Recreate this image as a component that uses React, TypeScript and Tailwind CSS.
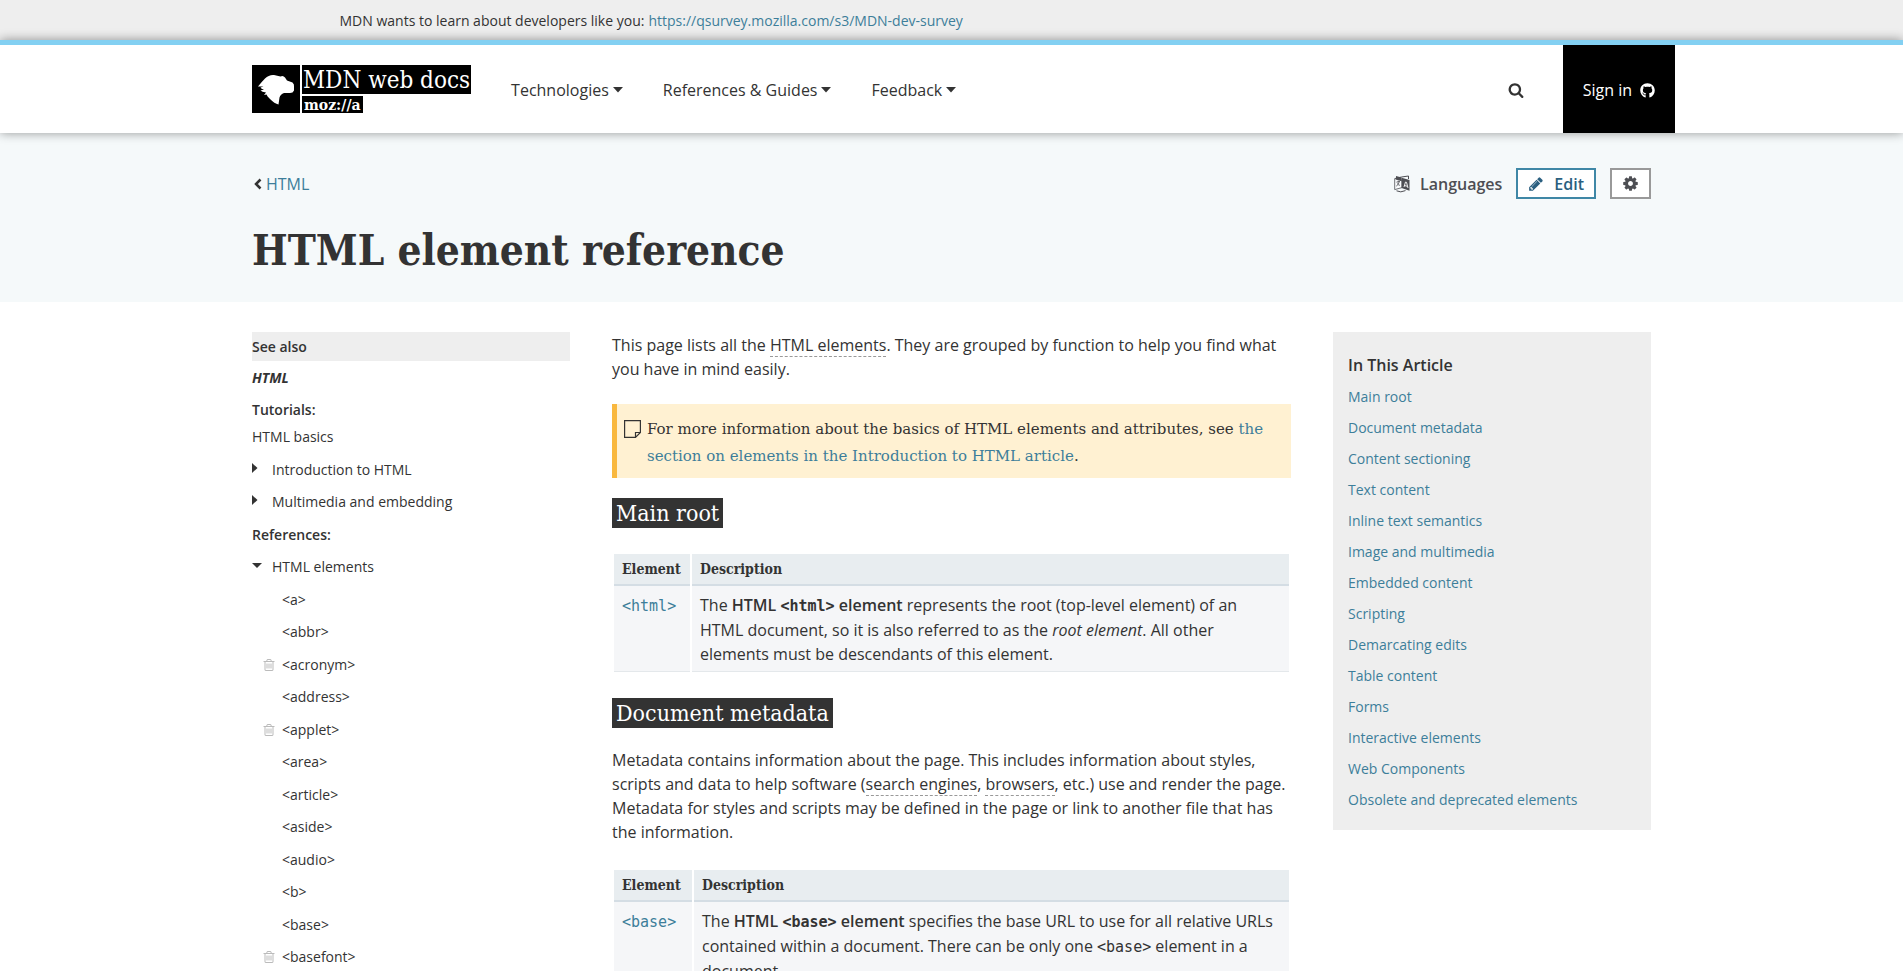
import type { ReactNode } from 'react';
import { FaGithub } from 'react-icons/fa';

const slab = "font-['DejaVu_Serif_Condensed','DejaVu_Serif',serif]";
const slabWide = "font-['DejaVu_Serif',serif]";
const link = 'text-[#3d7e9a] hover:underline';

function Icon({ d, className }: { d: string; className: string }) {
  return (
    <svg viewBox="0 0 1792 1792" className={className} fill="currentColor" aria-hidden="true">
      <path d={d} />
    </svg>
  );
}

const pencil =
  'M491 1536l91-91-235-235-91 91v107h128v128h107zm523-928q0-22-22-22-10 0-17 7l-542 542q-7 7-7 17 0 22 22 22 10 0 17-7l542-542q7-7 7-17zm-54-192l416 416-832 832h-416v-416zm683 96q0 53-37 90l-166 166-416-416 166-165q36-38 90-38 53 0 91 38l235 234q37 39 37 91z';
const cog =
  'M1152 896q0-106-75-181t-181-75-181 75-75 181 75 181 181 75 181-75 75-181zm512-109v222q0 12-8 23t-20 13l-185 28q-19 54-39 91 35 50 107 138 10 12 10 25t-9 23q-27 37-99 108t-94 71q-12 0-26-9l-138-108q-44 23-91 38-16 136-29 186-7 28-36 28h-222q-14 0-24.5-8.5t-11.5-21.5l-28-184q-49-16-90-37l-141 107q-10 9-25 9-14 0-25-11-126-114-165-168-7-10-7-23 0-12 8-23 15-21 51-66.5t54-70.5q-27-50-41-99l-183-27q-13-2-21-12.5t-8-23.5v-222q0-12 8-23t19-13l186-28q14-46 39-92-40-57-107-138-10-12-10-24 0-10 9-23 26-36 98.5-107.5t94.5-71.5q13 0 26 10l138 107q44-23 91-38 16-136 29-186 7-28 36-28h222q14 0 24.5 8.5t11.5 21.5l28 184q49 16 90 37l142-107q9-9 24-9 13 0 25 10 129 119 165 170 7 8 7 22 0 12-8 23-15 21-51 66.5t-54 70.5q26 50 41 98l183 28q13 2 21 12.5t8 23.5z';
const search =
  'M1216 832q0-185-131.5-316.5t-316.5-131.5-316.5 131.5-131.5 316.5 131.5 316.5 316.5 131.5 316.5-131.5 131.5-316.5zm512 832q0 52-38 90t-90 38q-54 0-90-38l-343-342q-179 124-399 124-143 0-273.5-55.5t-225-150-150-225-55.5-273.5 55.5-273.5 150-225 225-150 273.5-55.5 273.5 55.5 225 150 150 225 55.5 273.5q0 220-124 399l343 343q37 37 37 90z';
const trash =
  'M704 736v576q0 14-9 23t-23 9h-64q-14 0-23-9t-9-23v-576q0-14 9-23t23-9h64q14 0 23 9t9 23zm256 0v576q0 14-9 23t-23 9h-64q-14 0-23-9t-9-23v-576q0-14 9-23t23-9h64q14 0 23 9t9 23zm256 0v576q0 14-9 23t-23 9h-64q-14 0-23-9t-9-23v-576q0-14 9-23t23-9h64q14 0 23 9t9 23zm128 724v-948h-896v948q0 22 7 40.5t14.5 27 10.5 8.5h832q3 0 10.5-8.5t14.5-27 7-40.5zm-672-1076h448l-48-117q-7-9-17-11h-317q-10 2-17 11zm928 32v64q0 14-9 23t-23 9h-96v948q0 83-47 143.5t-113 60.5h-832q-66 0-113-58.5t-47-141.5v-952h-96q-14 0-23-9t-9-23v-64q0-14 9-23t23-9h309l70-167q15-37 54-63t79-26h320q40 0 79 26t54 63l70 167h309q14 0 23 9t9 23z';

function LanguageIcon() {
  return (
    <svg viewBox="0 0 16 18" className="h-[18px] w-4" aria-hidden="true">
      <path d="M1 3.5 7.5 2 14.5 1 14.5 4" fill="none" stroke="currentColor" strokeWidth="1" />
      <path d="M.7 3.6V14.6L8 12.6V5.2Z" fill="#fff" fillOpacity=".5" stroke="currentColor" strokeWidth=".8" />
      <path d="M7.6 2.8 15.5 5V15.8L7.6 13Z" fill="currentColor" />
      <path d="M2 1V4.6L7.6 6.3V2.6Z" fill="currentColor" />
      <path d="m10 12 1.5-5 1 .3L14 13M10.4 10.5l3 .8" fill="none" stroke="#fff" strokeWidth=".9" />
      <path d="M2.4 7.2 6 6.4M4.2 5.6v1.6M5.3 6.8Q4.6 9.8 2.2 11.2M3 8.4Q4.2 10 6 10.4" fill="none" stroke="currentColor" strokeWidth=".8" />
      <path d="M2.5 15.8Q6.5 18 11.5 15.6" fill="none" stroke="currentColor" strokeWidth="1" />
    </svg>
  );
}

function Logo() {
  return (
    <a href="#" aria-label="MDN web docs" className="flex gap-0.5 text-white">
      <span className="block size-12 bg-black">
        <svg viewBox="0 0 48 48" className="size-12" fill="#fff" aria-hidden="true">
          <path d="M6 21.5Q10 16.500 13 13.500Q17 9.500 22 10L28.500 11.500Q31 10 33 12.500L35 15.500L40.500 17.500Q42.500 19 42 22V25.500Q41 28 38 28H32Q28.500 29 27.500 32.500L26.500 39.500Q22.500 38.500 18 34Q15 31 14.500 29.500L12 30L14 27.500Q10 27 8.500 25.500L12 24.500Q9 24 8.500 22.500L11.500 21.500Z" />
        </svg>
      </span>
      <span className="flex flex-col items-start gap-0.5">
        <span className={`flex h-[29px] items-center bg-black px-px text-2xl ${slab}`}>MDN web docs</span>
        <span className={`flex h-[17px] items-center bg-black px-0.5 text-sm font-bold ${slabWide}`}>moz://a</span>
      </span>
    </a>
  );
}

function Caret() {
  return (
    <svg viewBox="0 0 10 6" className="h-1.5 w-2.5" fill="currentColor" aria-hidden="true">
      <path d="M0 0H10L5 5.500Z" />
    </svg>
  );
}

function Arrow({ open }: { open?: boolean }) {
  return (
    <svg viewBox="0 0 10 10" className="mb-1 size-2.5" fill="currentColor" aria-hidden="true">
      <path d={open ? 'M0 3H10L5 8Z' : 'M0 0L5.500 5L0 10Z'} />
    </svg>
  );
}

const elements: [string, boolean?][] = [
  ['<a>'],
  ['<abbr>'],
  ['<acronym>', true],
  ['<address>'],
  ['<applet>', true],
  ['<area>'],
  ['<article>'],
  ['<aside>'],
  ['<audio>'],
  ['<b>'],
  ['<base>'],
  ['<basefont>', true],
];

const toc = [
  'Main root',
  'Document metadata',
  'Content sectioning',
  'Text content',
  'Inline text semantics',
  'Image and multimedia',
  'Embedded content',
  'Scripting',
  'Demarcating edits',
  'Table content',
  'Forms',
  'Interactive elements',
  'Web Components',
  'Obsolete and deprecated elements',
];

function Code({ children }: { children: ReactNode }) {
  return <code className="font-['DejaVu_Sans_Mono',monospace] text-[15px]">{children}</code>;
}

function Term({ children }: { children: ReactNode }) {
  return (
    <a href="#" className="border-b border-dashed border-[#999]">
      {children}
    </a>
  );
}

function Heading({ children }: { children: ReactNode }) {
  return (
    <h2 className={`flex h-[30px] w-fit items-center bg-[#333] px-1 text-[23px] text-white ${slab}`}>{children}</h2>
  );
}

function ElementTable({ name, wide, children }: { name: string; wide?: boolean; children: ReactNode }) {
  const th = `h-8 border-b-2 border-[#d4dde4] bg-[#e8edf0] px-2 text-left text-sm leading-5 font-bold ${slab}`;
  const td = 'border-b border-[#e4e8eb] bg-[#f5f6f8] px-2 pt-[7px] pb-[5px] align-top';
  return (
    <table className="w-full border-separate border-spacing-x-0.5 border-spacing-y-0">
      <thead>
        <tr>
          <th className={`${th} ${wide ? 'w-[78px]' : 'w-[76px]'}`}>Element</th>
          <th className={th}>Description</th>
        </tr>
      </thead>
      <tbody>
        <tr>
          <td className={td}>
            <a href="#" className={link}>
              <Code>{name}</Code>
            </a>
          </td>
          <td className={td}>{children}</td>
        </tr>
      </tbody>
    </table>
  );
}

export default function App() {
  return (
    <div className="h-screen overflow-hidden bg-white font-['Open_Sans',sans-serif] text-base leading-6 text-[#333]">
      <div className="h-10 bg-[#eee]">
        <p className="mx-auto flex h-full max-w-[1224px] items-center gap-1 pt-0.5 text-sm">
          MDN wants to learn about developers like you:
          <a href="#" className={link}>
            https://qsurvey.mozilla.com/s3/MDN-dev-survey
          </a>
        </p>
      </div>

      <header className="relative border-t-[5px] border-[#83d0f2] bg-white shadow-[0_0_10px_rgba(0,0,0,0.4)]">
        <div className="mx-auto flex h-[88px] max-w-[1447px] items-center pl-6">
          <Logo />
          <nav className="ml-10 flex gap-10 pt-0.5">
            {['Technologies', 'References & Guides', 'Feedback'].map((label) => (
              <button key={label} type="button" className="flex items-center gap-1">
                {label}
                <Caret />
              </button>
            ))}
          </nav>
          <button type="button" aria-label="Search" className="ml-auto pt-0.5 pr-[39px]">
            <Icon d={search} className="size-4" />
          </button>
          <a href="#" className="flex h-full items-center gap-2 bg-black px-5 pt-0.5 text-white">
            Sign in
            <FaGithub className="size-[15px]" />
          </a>
        </div>
      </header>

      <div className="h-[169px] bg-[#f5f9fa]">
        <div className="mx-auto max-w-[1399px] pt-[35px]">
          <div className="flex h-[31px] items-center">
            <a href="#" className="flex items-center gap-1 text-[#3d7e9a]">
              <svg viewBox="0 0 10 12" className="h-3 w-2.5 text-[#333]" fill="none" stroke="currentColor" strokeWidth="2.5" aria-hidden="true">
                <path d="M8.500 1.500L4 6L8.500 10.500" />
              </svg>
              HTML
            </a>
            <button type="button" className="ml-auto flex items-center gap-2.5 font-semibold text-[#4d4e53]">
              <LanguageIcon />
              Languages
            </button>
            <button type="button" className="ml-3.5 flex h-full items-center gap-2.5 border-2 border-[#3f87a6] bg-white px-2.5 font-semibold text-[#2b5f80]">
              <Icon d={pencil} className="size-4" />
              Edit
            </button>
            <button type="button" aria-label="Settings" className="ml-3.5 flex h-full w-[41px] items-center justify-center border-2 border-[#999] bg-white text-[#4d4e53]">
              <Icon d={cog} className="size-[17px]" />
            </button>
          </div>
          <h1 className={`mt-[22px] text-[42px] leading-[60px] font-bold ${slab}`}>HTML element reference</h1>
        </div>
      </div>

      <div className="mx-auto mt-[30px] grid max-w-[1399px] grid-cols-[318px_1fr_318px] items-start gap-x-[42px]">
        <aside className="text-sm">
          <h3 className="bg-[#eee] py-1 leading-[21px] font-semibold">See also</h3>
          <p className="mt-1.5 leading-[21px] font-bold italic">
            <a href="#">HTML</a>
          </p>
          <p className="mt-[11px] leading-[21px] font-semibold">Tutorials:</p>
          <p className="mt-1.5 mb-[7px] leading-[21px]">
            <a href="#">HTML basics</a>
          </p>
          {['Introduction to HTML', 'Multimedia and embedding'].map((label) => (
            <button key={label} type="button" className="flex h-8 items-center gap-2.5">
              <Arrow />
              {label}
            </button>
          ))}
          <p className="leading-[33px] font-semibold">References:</p>
          <button type="button" className="flex h-8 items-center gap-2.5">
            <Arrow open />
            HTML elements
          </button>
          <ul>
            {elements.map(([name, old]) => (
              <li key={name} className="flex items-center gap-2 pl-2.5 odd:h-[33px] even:h-8">
                <span className="w-3">{old && <Icon d={trash} className="size-3.5 text-[#bbb]" />}</span>
                <a href="#">{name}</a>
              </li>
            ))}
          </ul>
        </aside>

        <main>
          <p className="mt-px">
            This page lists all the <Term>HTML elements</Term>. They are grouped by function to help you find what you
            have in mind easily.
          </p>
          <div className={`mt-[23px] flex gap-1.5 border-l-[5px] border-[#f9b83e] bg-[#fff1d2] pt-3 pr-4 pb-2 pl-[7px] text-[15px] leading-[27px] ${slabWide}`}>
            <svg viewBox="0 0 17 18" className="mt-1 h-[18px] w-[17px] shrink-0" fill="none" stroke="currentColor" strokeWidth="1.2" aria-hidden="true">
              <path d="M.6 .6H16.400V12.500L11.500 17.400H.6ZM11.500 17.400V12.500H16.400" />
            </svg>
            <p>
              For more information about the basics of HTML elements and attributes, see{' '}
              <a href="#" className={link}>
                the section on elements in the Introduction to HTML article
              </a>
              .
            </p>
          </div>
          <div className="mt-5 mb-[26px]">
            <Heading>Main root</Heading>
          </div>
          <ElementTable name="<html>">
            The{' '}
            <strong className="font-semibold">
              HTML <Code>{'<html>'}</Code> element
            </strong>{' '}
            represents the root (top-level element) of an HTML document, so it is also referred to as the{' '}
            <em>root element</em>. All other elements must be descendants of this element.
          </ElementTable>
          <div className="mt-[26px] mb-5">
            <Heading>Document metadata</Heading>
          </div>
          <p className="mb-[26px]">
            Metadata contains information about the page. This includes information about styles, scripts and data to
            help software (<Term>search engines</Term>, <Term>browsers</Term>, etc.) use and render the page. Metadata
            for styles and scripts may be defined in the page or link to another file that has the information.
          </p>
          <ElementTable name="<base>" wide>
            The{' '}
            <strong className="font-semibold">
              HTML <Code>{'<base>'}</Code> element
            </strong>{' '}
            specifies the base URL to use for all relative URLs contained within a document. There can be only one{' '}
            <Code>{'<base>'}</Code> element in a document.
          </ElementTable>
        </main>

        <nav className="bg-[#eee] px-[15px] pt-[21px] pb-[15px]" aria-label="In This Article">
          <h2 className="font-semibold">In This Article</h2>
          <ul className="mt-1 text-sm">
            {toc.map((item) => (
              <li key={item} className="leading-[31px]">
                <a href="#" className={link}>
                  {item}
                </a>
              </li>
            ))}
          </ul>
        </nav>
      </div>
    </div>
  );
}
